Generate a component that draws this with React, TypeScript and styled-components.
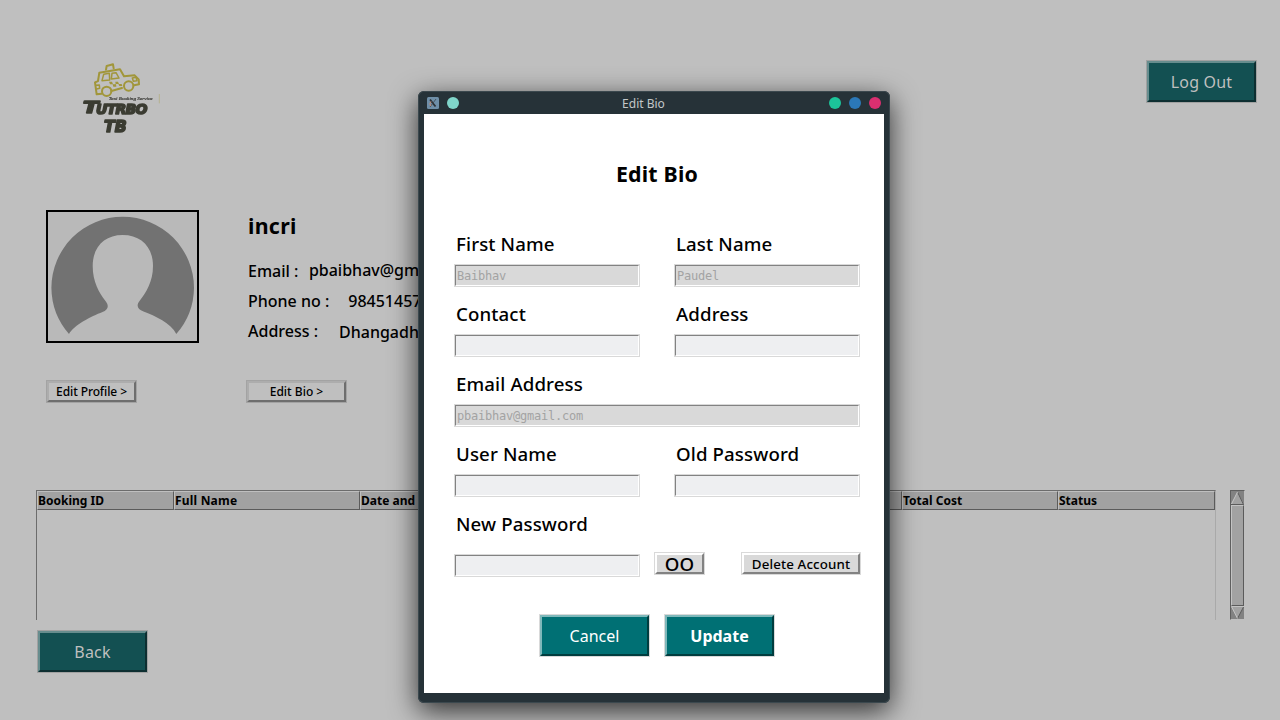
import React from 'react';
import styled, { createGlobalStyle } from 'styled-components';

const GlobalStyle = createGlobalStyle`
  * { box-sizing: border-box; }
  body { margin: 0; overflow: hidden; }
  button, input { font-family: inherit; margin: 0; }
`;

const Screen = styled.div`
  position: relative;
  width: 1280px;
  height: 720px;
  overflow: hidden;
  background: #bfbfbf;
  color: #000;
  font-family: 'Noto Sans', sans-serif;
`;

const Page = styled.main`
  display: flex;
  flex-direction: column;
  height: 100%;
`;

const Header = styled.header`
  display: flex;
  justify-content: space-between;
  align-items: flex-start;
  height: 210px;
  padding: 50px 23px 0 70px;
`;

const Logo = styled.svg`
  width: 100px;
  height: 95px;
  filter: blur(0.55px);
`;

const ActionButton = styled.button<{ $dim?: boolean; $bold?: boolean; $top?: number }>`
  display: block;
  flex: none;
  width: 109px;
  height: 41px;
  margin: ${p => 1 + (p.$top ?? 0)}px 1px 1px;
  padding: 0;
  border: 2px solid;
  border-color: ${p => (p.$dim ? '#678d8e #0d2f31 #0d2f31 #678d8e' : '#7fb8ba #003d3f #003d3f #7fb8ba')};
  box-shadow: 0 0 0 1px ${p => (p.$dim ? '#a1a1a1' : '#d9d9d9')};
  background: ${p => (p.$dim ? '#135052' : '#007074')};
  color: ${p => (p.$dim ? '#bfbfbf' : '#fff')};
  font-size: 16px;
  font-weight: ${p => (p.$bold ? 700 : 400)};
  letter-spacing: ${p => (p.$dim ? 0.2 : 0)}px;
  line-height: 22px;
`;

const SmallButton = styled.button<{ $width: number; $dim?: boolean; $size?: number; $spacing?: number; $drop?: number }>`
  display: flex;
  align-items: center;
  justify-content: center;
  flex: none;
  width: ${p => p.$width - 2}px;
  height: 21px;
  margin: 1px;
  padding: ${p => p.$drop ?? 0}px 0 0;
  border: 2px solid;
  border-color: ${p => (p.$dim ? '#adadad #6e6e6e #6e6e6e #adadad' : '#fff #828282 #828282 #fff')};
  box-shadow: 0 0 0 1px ${p => (p.$dim ? '#a3a3a3' : '#d9d9d9')};
  background: ${p => (p.$dim ? '#bfbfbf' : '#d9d9d9')};
  color: #000;
  font-size: ${p => p.$size ?? 12}px;
  font-weight: 500;
  letter-spacing: ${p => p.$spacing ?? 0}px;
  line-height: 17px;
  white-space: nowrap;
`;

const Profile = styled.section`
  display: flex;
  gap: 47px;
  height: 280px;
  padding-left: 46px;
`;

const AvatarColumn = styled.div`
  display: flex;
  flex-direction: column;
  gap: 37px;
  width: 153px;
`;

const Avatar = styled.div`
  width: 153px;
  height: 133px;
  border: 2px solid #000;
  background: #b9b9b9;
  svg { display: block; }
`;

const BioColumn = styled.div`
  display: flex;
  flex-direction: column;
`;

const UserName = styled.h1`
  margin: 0 0 19px 2px;
  font-size: 21.33px;
  font-weight: 700;
  letter-spacing: 0.3px;
  line-height: 31px;
`;

const InfoLine = styled.div<{ $gap: number; $shift?: number }>`
  display: flex;
  gap: ${p => p.$gap}px;
  height: 30px;
  margin-left: 2px;
  font-size: 16px;
  font-weight: 500;
  line-height: 22px;
  white-space: nowrap;
  span:last-child { margin-top: ${p => p.$shift ?? 0}px; }
`;

const BioAction = styled.div`
  margin-top: 30px;
`;

const Bookings = styled.section`
  display: flex;
  gap: 14px;
  height: 130px;
  padding-left: 36px;
`;

const Table = styled.div`
  width: 1180px;
  border: solid;
  border-width: 1px 1px 0 1px;
  border-color: #6c6c6c #a9a9a9 #bfbfbf #6c6c6c;
`;

const TableHead = styled.div`
  display: flex;
  height: 19px;
`;

const HeadCell = styled.div<{ $width: number; $spacing?: number }>`
  flex: none;
  width: ${p => p.$width}px;
  border: 1px solid;
  border-color: #bfbfbf #5b5b5b #5b5b5b #bfbfbf;
  background: #a2a2a2;
  font-size: 12px;
  font-weight: 700;
  letter-spacing: ${p => p.$spacing ?? 0}px;
  line-height: 17px;
  white-space: nowrap;
`;

const ScrollBar = styled.div`
  display: flex;
  flex-direction: column;
  width: 15px;
  height: 130px;
  border: 1px solid;
  border-color: #5f5f5f #bfbfbf #bfbfbf #5f5f5f;
  background: #828282;
  svg { display: block; flex: none; }
`;

const Thumb = styled.div`
  flex: 1;
  border: 1px solid;
  border-color: #c3c3c3 #5b5b5b #5b5b5b #c3c3c3;
  background: #a2a2a2;
`;

const Footer = styled.footer`
  padding: 10px 0 0 37px;
`;

const Dialog = styled.div`
  position: absolute;
  left: 418px;
  top: 91px;
  display: flex;
  flex-direction: column;
  width: 472px;
  height: 612px;
  padding: 0 6px 10px;
  border-radius: 6px;
  background: #263238;
  box-shadow: inset 0 0 0 1px #3b484e, 0 8px 28px rgba(0, 0, 0, 0.75);
`;

const TitleBar = styled.div`
  display: flex;
  align-items: center;
  height: 23px;
  padding: 1px 3px 0;
  svg { display: block; }
`;

const WindowTitle = styled.div`
  flex: 1;
  padding-right: 21px;
  color: #c3c7c9;
  font-size: 12px;
  line-height: 17px;
  text-align: center;
`;

const Controls = styled.div`
  display: flex;
  align-items: center;
  gap: 8px;
  width: 52px;
`;

const Dot = styled.i<{ $color: string }>`
  width: 12px;
  height: 12px;
  border-radius: 50%;
  background: ${p => p.$color};
`;

const Form = styled.form`
  flex: 1;
  padding: 44px 23px 0 30px;
  background: #fff;
`;

const FormTitle = styled.h2`
  margin: 0 0 40px -1px;
  font-size: 21.33px;
  font-weight: 700;
  letter-spacing: 0.2px;
  line-height: 32px;
  text-align: center;
`;

const Row = styled.div`
  display: flex;
  gap: 34px;
  height: 70px;
`;

const FieldBox = styled.label<{ $width: number; $gap?: number }>`
  display: flex;
  flex-direction: column;
  gap: ${p => p.$gap ?? 6}px;
  width: ${p => p.$width}px;
`;

const Caption = styled.span`
  padding-left: 2px;
  font-size: 18.67px;
  font-weight: 500;
  letter-spacing: 0.12px;
  line-height: 28px;
  white-space: nowrap;
`;

const Entry = styled.input`
  height: 21px;
  margin: 1px;
  padding: 0 1px;
  border: 1px solid;
  border-color: #828282 #fff #fff #828282;
  border-radius: 0;
  outline: 1px solid #d9d9d9;
  background: #eeeff1;
  font-family: 'DejaVu Sans Mono', monospace;
  font-size: 12px;
  letter-spacing: -0.225px;
  &:disabled { background: #d9d9d9; color: #a3a3a3; }
`;

const PasswordRow = styled.div`
  display: flex;
  height: 104px;
`;

const PasswordActions = styled.div`
  display: flex;
  gap: 36px;
  margin: 42px 0 0 14px;
  height: 23px;
`;

const FormActions = styled.div`
  display: flex;
  gap: 14px;
  padding-left: 85px;
`;

function Field({ label, value, width = 186, gap }: { label: string; value?: string; width?: number; gap?: number }) {
  return (
    <FieldBox $width={width} $gap={gap}>
      <Caption>{label}</Caption>
      <Entry defaultValue={value} disabled={value !== undefined} />
    </FieldBox>
  );
}

function TaxiLogo() {
  return (
    <Logo viewBox="0 0 300 285">
      <g fill="none" stroke="#a1963a" strokeWidth="6" strokeLinejoin="round" strokeLinecap="round">
        <path d="M95 131 L80 133 L75 97 L84 93 L88 68 L150 58 L162 79 L194 76 L206 88 L207 103 L192 106 M124 123 L156 114" />
        <path d="M108 59 L110 48 L129 43 L131 55" />
        <path d="M101 73 L118 70 L119 90 L96 92 Z M126 70 L138 68 L147 84 L124 87 Z" strokeWidth="4.5" />
        <path d="M187 84 L198 82 L201 92 L190 94 Z M78 106 L88 105 L89 115 L80 117" strokeWidth="4.5" />
        <circle cx="110" cy="124" r="14" />
        <circle cx="176" cy="108" r="14" />
      </g>
      <path d="M117 95h9l3 8h8l-1-8h8l3 7h8l2 6h-9l-3-6h-7l1 8h-9l-2-7h-8z" fill="#a1963a" />
      <path d="M268 132v28" stroke="#b1ac78" strokeWidth="2" />
      <text x="116" y="151" fontFamily="Liberation Serif" fontStyle="italic" fontSize="15" fill="#3c3c38" stroke="#3c3c38" strokeWidth=".6" textLength="132" lengthAdjust="spacingAndGlyphs">Taxi Booking Service</text>
      <g fontFamily="DejaVu Sans" fontWeight="700" fontStyle="italic" fill="#3b3c32" stroke="#3b3c32" strokeWidth="5" strokeLinejoin="round">
        <text x="39" y="190" fontSize="50" textLength="46" lengthAdjust="spacingAndGlyphs">T</text>
        <text x="78" y="192" fontSize="44" textLength="154" lengthAdjust="spacing">
          <tspan fontSize="42">UTRBO</tspan>
        </text>
        <text x="102" y="245" fontSize="50" textLength="68" lengthAdjust="spacingAndGlyphs">TB</text>
      </g>
    </Logo>
  );
}

function AvatarPicture() {
  return (
    <svg width="149" height="129" viewBox="48 212 149 129">
      <path
        fill="#727272"
        d="M69 334 A71.3 71.3 0 0 1 51.400 288 A71.300 71.300 0 0 1 194 288 A71.300 71.300 0 0 1 176.300 334 C171 323 155 316 143.500 311.500 C137.500 309.500 136 305.500 139.500 301 C146 292.500 153 282 153 266 C153 247 141 235 122.700 235 C104.500 235 92.700 247 92.700 266 C92.700 282 99 292.500 105.500 301 C109.500 306 108 310 102.500 312 C91 316.500 74 325 69 334 Z"
      />
    </svg>
  );
}

function ScrollArrow({ down }: { down?: boolean }) {
  return down ? (
    <svg width="13" height="13">
      <path d="M0 .5H13L6.500 12.500Z" fill="#a2a2a2" />
      <path d="M12.500 1L6.500 12.500" stroke="#5b5b5b" />
      <path d="M13 .5H.5L6.500 12.500" stroke="#c3c3c3" fill="none" />
    </svg>
  ) : (
    <svg width="13" height="14">
      <path d="M0 13H13L6.500 1Z" fill="#a2a2a2" />
      <path d="M6.500 1L12.500 13.500H0" stroke="#5b5b5b" fill="none" />
      <path d="M.5 13L6.500 1" stroke="#c3c3c3" />
    </svg>
  );
}

export default function App() {
  return (
    <Screen>
      <GlobalStyle />
      <Page>
        <Header>
          <TaxiLogo />
          <ActionButton $dim $top={10}>Log Out</ActionButton>
        </Header>
        <Profile>
          <AvatarColumn>
            <Avatar><AvatarPicture /></Avatar>
            <SmallButton $dim $width={91} $spacing={-0.1}>Edit Profile &gt;</SmallButton>
          </AvatarColumn>
          <BioColumn>
            <UserName>incri</UserName>
            <InfoLine $gap={10.5} $shift={-1}><span>Email :</span><span>pbaibhav@gmail.com</span></InfoLine>
            <InfoLine $gap={19}><span>Phone no :</span><span>9845145700</span></InfoLine>
            <InfoLine $gap={21} $shift={1}><span>Address :</span><span>Dhangadhi</span></InfoLine>
            <BioAction><SmallButton $dim $width={101}>Edit Bio &gt;</SmallButton></BioAction>
          </BioColumn>
        </Profile>
        <Bookings>
          <Table>
            <TableHead>
              <HeadCell $width={137}>Booking ID</HeadCell>
              <HeadCell $width={186} $spacing={0.2}>Full Name</HeadCell>
              <HeadCell $width={186}>Date and Time</HeadCell>
              <HeadCell $width={356} />
              <HeadCell $width={156}>Total Cost</HeadCell>
              <HeadCell $width={157}>Status</HeadCell>
            </TableHead>
          </Table>
          <ScrollBar>
            <ScrollArrow />
            <Thumb />
            <ScrollArrow down />
          </ScrollBar>
        </Bookings>
        <Footer><ActionButton $dim>Back</ActionButton></Footer>
      </Page>

      <Dialog>
        <TitleBar>
          <Controls>
            <svg width="12" height="12">
              <rect width="12" height="12" rx="1.5" fill="#6f8fa8" />
              <path d="M3 2.500L8.500 9.500" stroke="#2e3236" strokeWidth="1.800" />
              <path d="M9 2L3 10" stroke="#3f464c" strokeWidth=".8" />
              <path d="M4 4.500Q1.500 7 4 9" stroke="#c78a72" fill="none" />
            </svg>
            <Dot $color="#80d6cb" />
          </Controls>
          <WindowTitle>Edit Bio</WindowTitle>
          <Controls>
            <Dot $color="#1cc49a" />
            <Dot $color="#2b78b8" />
            <Dot $color="#d92f70" />
          </Controls>
        </TitleBar>
        <Form onSubmit={e => e.preventDefault()}>
          <FormTitle>Edit Bio</FormTitle>
          <Row><Field label="First Name" value="Baibhav" /><Field label="Last Name" value="Paudel" /></Row>
          <Row><Field label="Contact" /><Field label="Address" /></Row>
          <Row><Field label="Email Address" value="pbaibhav@gmail.com" width={406} /></Row>
          <Row><Field label="User Name" /><Field label="Old Password" /></Row>
          <PasswordRow>
            <Field label="New Password" gap={16} />
            <PasswordActions>
              <SmallButton type="button" $width={51} $size={18.67}>OO</SmallButton>
              <SmallButton type="button" $width={120} $size={13.33} $spacing={0.12} $drop={1}>Delete Account</SmallButton>
            </PasswordActions>
          </PasswordRow>
          <FormActions>
            <ActionButton type="button">Cancel</ActionButton>
            <ActionButton $bold>Update</ActionButton>
          </FormActions>
        </Form>
      </Dialog>
    </Screen>
  );
}
